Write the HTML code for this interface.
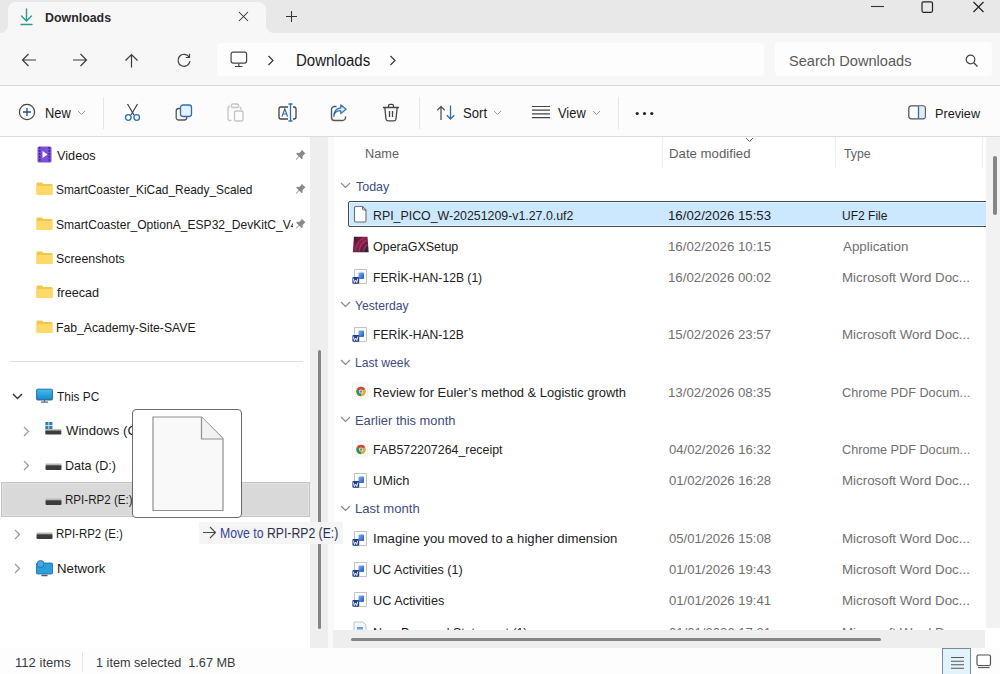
<!DOCTYPE html>
<html><head><meta charset="utf-8"><title>Downloads</title>
<style>
html,body{margin:0;padding:0;}
body{width:1000px;height:674px;overflow:hidden;position:relative;background:#fff;font-family:"Liberation Sans", sans-serif;}
</style></head><body>
<div style="position:absolute;left:0px;top:0px;width:1000px;height:33px;background:#e8e8e8;"></div>
<div style="position:absolute;left:8px;top:2px;width:258px;height:32px;background:#f7f7f7;border-radius:8px 8px 0 0;"></div>
<div style="position:absolute;left:0px;top:25px;width:8px;height:8px;background:#f7f7f7;"></div>
<div style="position:absolute;left:0px;top:17px;width:8px;height:16px;background:#e8e8e8;border-bottom-right-radius:8px;"></div>
<div style="position:absolute;left:266px;top:25px;width:8px;height:8px;background:#f7f7f7;"></div>
<div style="position:absolute;left:266px;top:17px;width:8px;height:16px;background:#e8e8e8;border-bottom-left-radius:8px;"></div>
<svg style="position:absolute;left:19px;top:8px;" width="15" height="18" viewBox="0 0 15 18"><g stroke="#2a9d8f" stroke-width="1.4" fill="none" stroke-linecap="round"><path d="M7.5 1v12M2.5 8l5 5 5-5M2 16.5h11"/></g></svg>
<div style="position:absolute;left:45.28px;top:9.70px;font-size:13.5px;line-height:normal;color:#2a2a2a;font-weight:700;white-space:pre;transform:scaleX(0.9169);transform-origin:0 0;">Downloads</div>
<svg style="position:absolute;left:238px;top:11px;" width="11" height="11" viewBox="0 0 11 11"><path d="M1 1l9 9M10 1l-9 9" stroke="#333" stroke-width="1.05"/></svg>
<svg style="position:absolute;left:285px;top:10px;" width="13" height="13" viewBox="0 0 13 13"><path d="M6.5 1v11M1 6.5h11" stroke="#333" stroke-width="1.05"/></svg>
<svg style="position:absolute;left:871px;top:4px;" width="14" height="4" viewBox="0 0 14 4"><path d="M0 2.5h13" stroke="#333" stroke-width="1.1"/></svg>
<svg style="position:absolute;left:921px;top:1px;" width="13" height="12" viewBox="0 0 13 12"><rect x="1" y="0.8" width="10.5" height="10.5" rx="1.5" fill="none" stroke="#222" stroke-width="1.2"/></svg>
<svg style="position:absolute;left:972px;top:1px;" width="13" height="12" viewBox="0 0 13 12"><path d="M1.5 1l10 10M11.5 1l-10 10" stroke="#222" stroke-width="1.2"/></svg>
<div style="position:absolute;left:0px;top:33px;width:1000px;height:53px;background:#f7f7f7;"></div>
<div style="position:absolute;left:0px;top:85px;width:1000px;height:1px;background:#d6d6d6;"></div>
<svg style="position:absolute;left:21px;top:53px;" width="16" height="14" viewBox="0 0 16 14"><path d="M15 7H1.5M7.5 1L1.5 7l6 6" stroke="#3c3c3c" stroke-width="1.2" fill="none"/></svg>
<svg style="position:absolute;left:72px;top:53px;" width="16" height="14" viewBox="0 0 16 14"><path d="M1 7h13.5M8.5 1l6 6-6 6" stroke="#3c3c3c" stroke-width="1.2" fill="none"/></svg>
<svg style="position:absolute;left:124px;top:53px;" width="15" height="15" viewBox="0 0 15 15"><path d="M7.5 14.5V1.5M1.5 7.5l6-6 6 6" stroke="#3c3c3c" stroke-width="1.2" fill="none"/></svg>
<svg style="position:absolute;left:176px;top:53px;" width="16" height="15" viewBox="0 0 16 15"><path d="M13.2 4.2A6 6 0 1 0 14 8" stroke="#3c3c3c" stroke-width="1.2" fill="none"/><path d="M13.5 0.8v3.7H9.8" stroke="#3c3c3c" stroke-width="1.2" fill="none"/></svg>
<div style="position:absolute;left:217px;top:43px;width:547px;height:33px;background:#fdfdfd;border-radius:4px;"></div>
<svg style="position:absolute;left:230px;top:51px;" width="18" height="17" viewBox="0 0 18 17"><rect x="1.1" y="1.1" width="15.5" height="11" rx="2" fill="none" stroke="#444" stroke-width="1.2"/><path d="M8.8 12.5v2.5M5 15.5h7.5" stroke="#444" stroke-width="1.2"/></svg>
<svg style="position:absolute;left:267px;top:55px;" width="8" height="11" viewBox="0 0 8 11"><path d="M1.5 1l4.5 4.5-4.5 4.5" stroke="#333" stroke-width="1.2" fill="none"/></svg>
<div style="position:absolute;left:295.86px;top:51.70px;font-size:16px;line-height:normal;color:#1a1a1a;font-weight:400;white-space:pre;transform:scaleX(0.9372);transform-origin:0 0;">Downloads</div>
<svg style="position:absolute;left:389px;top:55px;" width="8" height="11" viewBox="0 0 8 11"><path d="M1.5 1l4.5 4.5-4.5 4.5" stroke="#333" stroke-width="1.2" fill="none"/></svg>
<div style="position:absolute;left:775px;top:42px;width:217px;height:34px;background:#fdfdfd;border-radius:4px;"></div>
<div style="position:absolute;left:789.43px;top:52.00px;font-size:15px;line-height:normal;color:#5a5a5a;font-weight:400;white-space:pre;transform:scaleX(0.9728);transform-origin:0 0;">Search Downloads</div>
<svg style="position:absolute;left:965px;top:54px;" width="14" height="14" viewBox="0 0 14 14"><circle cx="5.5" cy="5.5" r="4.3" fill="none" stroke="#444" stroke-width="1.2"/><path d="M8.7 8.7l3.8 3.8" stroke="#444" stroke-width="1.3"/></svg>
<div style="position:absolute;left:0px;top:86px;width:1000px;height:50px;background:#fcfcfc;"></div>
<div style="position:absolute;left:0px;top:136px;width:1000px;height:1px;background:#dcdcdc;"></div>
<svg style="position:absolute;left:18px;top:103px;" width="18" height="18" viewBox="0 0 18 18"><circle cx="9" cy="9" r="7.6" fill="none" stroke="#444" stroke-width="1.2"/><path d="M9 5v8M5 9h8" stroke="#1f4e8c" stroke-width="1.3"/></svg>
<div style="position:absolute;left:44.68px;top:104.80px;font-size:14px;line-height:normal;color:#1a1a1a;font-weight:400;white-space:pre;transform:scaleX(0.9185);transform-origin:0 0;">New</div>
<svg style="position:absolute;left:77px;top:110px;" width="9" height="6" viewBox="0 0 9 6"><path d="M1 1l3.5 3.5L8 1" stroke="#999" stroke-width="1" fill="none"/></svg>
<div style="position:absolute;left:103px;top:97px;width:1px;height:32px;background:#e6e6e6;"></div>
<svg style="position:absolute;left:123px;top:103px;" width="19" height="19" viewBox="0 0 19 19"><path d="M4.5 1l6.5 11M14.5 1L8 12" stroke="#444" stroke-width="1.2" fill="none"/><circle cx="5.3" cy="14.5" r="2.8" fill="none" stroke="#3070a8" stroke-width="1.3"/><circle cx="13.7" cy="14.5" r="2.8" fill="none" stroke="#3070a8" stroke-width="1.3"/></svg>
<svg style="position:absolute;left:175px;top:104px;" width="18" height="18" viewBox="0 0 18 18"><rect x="1.2" y="4.5" width="10.5" height="11.5" rx="2.5" fill="none" stroke="#555" stroke-width="1.3"/><rect x="5.5" y="1" width="11" height="11.5" rx="2.5" fill="#e6f2fb" stroke="#3070a8" stroke-width="1.3"/></svg>
<svg style="position:absolute;left:227px;top:103px;" width="18" height="19" viewBox="0 0 18 19"><path d="M3 3.5h-0.5a1.5 1.5 0 0 0-1.5 1.5v11a1.5 1.5 0 0 0 1.5 1.5h2" fill="none" stroke="#c4c4c4" stroke-width="1.3"/><rect x="4.5" y="1" width="7" height="3.5" rx="1.2" fill="none" stroke="#c4c4c4" stroke-width="1.3"/><path d="M12.5 4.2a1.5 1.5 0 0 1 1.5 1.5v1" fill="none" stroke="#c4c4c4" stroke-width="1.3"/><rect x="7.5" y="8" width="8.5" height="10" rx="1.5" fill="none" stroke="#c4c4c4" stroke-width="1.3"/></svg>
<svg style="position:absolute;left:278px;top:103px;" width="19" height="19" viewBox="0 0 19 19"><path d="M10 4H3a2 2 0 0 0-2 2v8a2 2 0 0 0 2 2h7M15 4h1a2 2 0 0 1 2 2v8a2 2 0 0 1-2 2h-1" fill="none" stroke="#444" stroke-width="1.3"/><path d="M12.5 1v17M10.5 1h4M10.5 18h4" stroke="#3070a8" stroke-width="1.3"/><path d="M4 13.5l2.8-7.5 2.8 7.5M5 11h3.6" stroke="#3070a8" stroke-width="1.2" fill="none"/></svg>
<svg style="position:absolute;left:330px;top:104px;" width="19" height="18" viewBox="0 0 19 18"><path d="M6.5 2.5H4.5a3 3 0 0 0-3 3v8a3 3 0 0 0 3 3h8a3 3 0 0 0 3-3V12.5" fill="none" stroke="#555" stroke-width="1.4"/><path d="M3.8 12.3c0.6-3.6 3.2-5.6 7-5.6V9.6l5.2-4.3-5.2-4.3v2.8c-4.2 0.3-6.8 3.5-7 8.5z" fill="#dcedf9" stroke="#3070a8" stroke-width="1.2" stroke-linejoin="round"/></svg>
<svg style="position:absolute;left:382px;top:103px;" width="18" height="19" viewBox="0 0 18 19"><path d="M1 4.5h16M6.5 4.5V2.8a1.5 1.5 0 0 1 1.5-1.5h2a1.5 1.5 0 0 1 1.5 1.5v1.7" fill="none" stroke="#444" stroke-width="1.3"/><path d="M2.8 4.5l1.2 11.5a2 2 0 0 0 2 1.8h6a2 2 0 0 0 2-1.8l1.2-11.5" fill="none" stroke="#444" stroke-width="1.3"/><path d="M7.5 8v6M10.5 8v6" stroke="#444" stroke-width="1.3"/></svg>
<div style="position:absolute;left:419px;top:97px;width:1px;height:32px;background:#e6e6e6;"></div>
<svg style="position:absolute;left:436px;top:105px;" width="20" height="16" viewBox="0 0 20 16"><path d="M5 15V1.5M1.3 5.2l3.7-3.7 3.7 3.7" stroke="#555" stroke-width="1.3" fill="none"/><path d="M14.5 0.5v13.5M10.8 10.3l3.7 3.7 3.7-3.7" stroke="#3070a8" stroke-width="1.3" fill="none"/></svg>
<div style="position:absolute;left:462.76px;top:105.00px;font-size:14px;line-height:normal;color:#1a1a1a;font-weight:400;white-space:pre;transform:scaleX(0.9360);transform-origin:0 0;">Sort</div>
<svg style="position:absolute;left:493px;top:110px;" width="9" height="6" viewBox="0 0 9 6"><path d="M1 1l3.5 3.5L8 1" stroke="#999" stroke-width="1" fill="none"/></svg>
<svg style="position:absolute;left:531px;top:105px;" width="20" height="15" viewBox="0 0 20 15"><path d="M1 1.5h18M1 5.2h18M1 8.9h18M1 12.6h18" stroke="#444" stroke-width="1.2"/></svg>
<div style="position:absolute;left:558.30px;top:105.00px;font-size:14px;line-height:normal;color:#1a1a1a;font-weight:400;white-space:pre;transform:scaleX(0.9200);transform-origin:0 0;">View</div>
<svg style="position:absolute;left:592px;top:110px;" width="9" height="6" viewBox="0 0 9 6"><path d="M1 1l3.5 3.5L8 1" stroke="#999" stroke-width="1" fill="none"/></svg>
<div style="position:absolute;left:618px;top:97px;width:1px;height:32px;background:#e6e6e6;"></div>
<svg style="position:absolute;left:635px;top:111px;" width="20" height="5" viewBox="0 0 20 5"><circle cx="2.2" cy="2.5" r="1.6" fill="#222"/><circle cx="9.5" cy="2.5" r="1.6" fill="#222"/><circle cx="16.8" cy="2.5" r="1.6" fill="#222"/></svg>
<svg style="position:absolute;left:908px;top:105px;" width="19" height="15" viewBox="0 0 19 15"><rect x="0.8" y="0.8" width="16.5" height="13" rx="2.5" fill="none" stroke="#555" stroke-width="1.3"/><rect x="10.5" y="1.5" width="6" height="11.5" fill="#dcecf8"/><path d="M10.5 1v13" stroke="#3070a8" stroke-width="1.3"/></svg>
<div style="position:absolute;left:934.56px;top:106.00px;font-size:13.5px;line-height:normal;color:#1a1a1a;font-weight:400;white-space:pre;transform:scaleX(0.9383);transform-origin:0 0;">Preview</div>
<div style="position:absolute;left:0px;top:137px;width:330px;height:511px;background:#ffffff;"></div>
<svg style="position:absolute;left:37px;top:146px;" width="15" height="17" viewBox="0 0 15 17"><rect x="0.5" y="0.5" width="14" height="16" rx="1.5" fill="#7b4fd6"/><path d="M2 2h1.5M2 5h1.5M2 8h1.5M2 11h1.5M2 14h1.5M11.5 2H13M11.5 5H13M11.5 8H13M11.5 11H13M11.5 14H13" stroke="#3b1f7a" stroke-width="1.3"/><path d="M5.5 5l5 3.5-5 3.5z" fill="#fff"/></svg>
<div style="position:absolute;left:56.50px;top:147.50px;font-size:13.5px;line-height:normal;color:#1a1a1a;font-weight:400;white-space:pre;transform:scaleX(0.9415);transform-origin:0 0;">Videos</div>
<svg style="position:absolute;left:295px;top:148px;" width="12" height="12" viewBox="0 0 12 12"><path d="M6.5 1.5l4 4-1 .5-2 2.2.2 2-1 1-2.5-2.5-3 3-.5-.5 3-3-2.5-2.5 1-1 2 .2 2.2-2z" fill="#8a8a8a"/></svg>
<svg style="position:absolute;left:36px;top:182px;" width="17" height="13" viewBox="0 0 17 13"><path d="M0.5 1.5a1 1 0 0 1 1-1h4.5l1.5 1.5h8a1 1 0 0 1 1 1V12a1 1 0 0 1-1 1h-14a1 1 0 0 1-1-1z" fill="#f3c64f"/><path d="M0.5 4h16V12a1 1 0 0 1-1 1h-14a1 1 0 0 1-1-1z" fill="#ffd968"/></svg>
<div style="position:absolute;left:0;top:0;width:292.5px;height:674px;overflow:hidden;"><div style="position:absolute;left:56.12px;top:181.90px;font-size:13.5px;line-height:normal;color:#1a1a1a;font-weight:400;white-space:pre;transform:scaleX(0.8814);transform-origin:0 0;">SmartCoaster_KiCad_Ready_Scaled</div></div>
<svg style="position:absolute;left:295px;top:182px;" width="12" height="12" viewBox="0 0 12 12"><path d="M6.5 1.5l4 4-1 .5-2 2.2.2 2-1 1-2.5-2.5-3 3-.5-.5 3-3-2.5-2.5 1-1 2 .2 2.2-2z" fill="#8a8a8a"/></svg>
<svg style="position:absolute;left:36px;top:217px;" width="17" height="13" viewBox="0 0 17 13"><path d="M0.5 1.5a1 1 0 0 1 1-1h4.5l1.5 1.5h8a1 1 0 0 1 1 1V12a1 1 0 0 1-1 1h-14a1 1 0 0 1-1-1z" fill="#f3c64f"/><path d="M0.5 4h16V12a1 1 0 0 1-1 1h-14a1 1 0 0 1-1-1z" fill="#ffd968"/></svg>
<div style="position:absolute;left:0;top:0;width:292.5px;height:674px;overflow:hidden;"><div style="position:absolute;left:56.11px;top:216.50px;font-size:13.5px;line-height:normal;color:#1a1a1a;font-weight:400;white-space:pre;transform:scaleX(0.8941);transform-origin:0 0;">SmartCoaster_OptionA_ESP32_DevKitC_V4</div></div>
<svg style="position:absolute;left:295px;top:217px;" width="12" height="12" viewBox="0 0 12 12"><path d="M6.5 1.5l4 4-1 .5-2 2.2.2 2-1 1-2.5-2.5-3 3-.5-.5 3-3-2.5-2.5 1-1 2 .2 2.2-2z" fill="#8a8a8a"/></svg>
<svg style="position:absolute;left:36px;top:251px;" width="17" height="13" viewBox="0 0 17 13"><path d="M0.5 1.5a1 1 0 0 1 1-1h4.5l1.5 1.5h8a1 1 0 0 1 1 1V12a1 1 0 0 1-1 1h-14a1 1 0 0 1-1-1z" fill="#f3c64f"/><path d="M0.5 4h16V12a1 1 0 0 1-1 1h-14a1 1 0 0 1-1-1z" fill="#ffd968"/></svg>
<div style="position:absolute;left:56.08px;top:250.90px;font-size:13.5px;line-height:normal;color:#1a1a1a;font-weight:400;white-space:pre;transform:scaleX(0.9162);transform-origin:0 0;">Screenshots</div>
<svg style="position:absolute;left:36px;top:285px;" width="17" height="13" viewBox="0 0 17 13"><path d="M0.5 1.5a1 1 0 0 1 1-1h4.5l1.5 1.5h8a1 1 0 0 1 1 1V12a1 1 0 0 1-1 1h-14a1 1 0 0 1-1-1z" fill="#f3c64f"/><path d="M0.5 4h16V12a1 1 0 0 1-1 1h-14a1 1 0 0 1-1-1z" fill="#ffd968"/></svg>
<div style="position:absolute;left:57.00px;top:285.30px;font-size:13.5px;line-height:normal;color:#1a1a1a;font-weight:400;white-space:pre;transform:scaleX(0.9341);transform-origin:0 0;">freecad</div>
<svg style="position:absolute;left:36px;top:320px;" width="17" height="13" viewBox="0 0 17 13"><path d="M0.5 1.5a1 1 0 0 1 1-1h4.5l1.5 1.5h8a1 1 0 0 1 1 1V12a1 1 0 0 1-1 1h-14a1 1 0 0 1-1-1z" fill="#f3c64f"/><path d="M0.5 4h16V12a1 1 0 0 1-1 1h-14a1 1 0 0 1-1-1z" fill="#ffd968"/></svg>
<div style="position:absolute;left:56.10px;top:319.70px;font-size:13.5px;line-height:normal;color:#1a1a1a;font-weight:400;white-space:pre;transform:scaleX(0.9046);transform-origin:0 0;">Fab_Academy-Site-SAVE</div>
<div style="position:absolute;left:10px;top:361px;width:293px;height:1px;background:#e0e0e0;"></div>
<div style="position:absolute;left:1px;top:482px;width:309px;height:34.5px;background:#d9d9d9;border:1px solid #c4c4c4;box-sizing:border-box;box-shadow:inset 0 0 0 1px #e2e2e2;"></div>
<svg style="position:absolute;left:12px;top:393px;" width="11" height="7" viewBox="0 0 11 7"><path d="M1 1l4.5 4.5L10 1" stroke="#333" stroke-width="1.4" fill="none"/></svg>
<svg style="position:absolute;left:36px;top:388px;" width="17" height="16" viewBox="0 0 17 16"><defs><linearGradient id="mg" x1="0" y1="0" x2="0" y2="1"><stop offset="0" stop-color="#3fc0ef"/><stop offset="1" stop-color="#1b86c9"/></linearGradient></defs><rect x="0.6" y="1.2" width="15.8" height="10.8" rx="1" fill="url(#mg)" stroke="#1a5f95" stroke-width="0.9"/><path d="M8.5 12v1.5M5 14.2h7" stroke="#6a6a6a" stroke-width="1.3"/></svg>
<div style="position:absolute;left:56.90px;top:388.80px;font-size:13.5px;line-height:normal;color:#1a1a1a;font-weight:400;white-space:pre;transform:scaleX(0.8809);transform-origin:0 0;">This PC</div>
<svg style="position:absolute;left:23px;top:426px;" width="7" height="11" viewBox="0 0 7 11"><path d="M1 1l4.5 4.5L1 10" stroke="#9a9a9a" stroke-width="1.2" fill="none"/></svg>
<svg style="position:absolute;left:45px;top:421px;" width="17" height="14" viewBox="0 0 17 14"><rect x="0.3" y="1" width="3.2" height="3.2" fill="#2f7fb5"/><rect x="4.2" y="1" width="3.2" height="3.2" fill="#2f7fb5"/><rect x="0.3" y="4.9" width="3.2" height="3.2" fill="#2f7fb5"/><rect x="4.2" y="4.9" width="3.2" height="3.2" fill="#2f7fb5"/><rect x="0.3" y="8.4" width="16" height="1.6" fill="#9a9a9a"/><rect x="0.3" y="9.8" width="16" height="3.6" rx="0.6" fill="#3c3c3c"/></svg>
<div style="position:absolute;left:65.90px;top:423.20px;font-size:13.5px;line-height:normal;color:#1a1a1a;font-weight:400;white-space:pre;transform:scaleX(0.9762);transform-origin:0 0;">Windows (C:)</div>
<svg style="position:absolute;left:23px;top:460px;" width="7" height="11" viewBox="0 0 7 11"><path d="M1 1l4.5 4.5L1 10" stroke="#9a9a9a" stroke-width="1.2" fill="none"/></svg>
<svg style="position:absolute;left:45px;top:463px;" width="17" height="8" viewBox="0 0 17 8"><rect x="0.5" y="0.5" width="16" height="2.2" rx="0.8" fill="#b9b9b9"/><rect x="0.5" y="2.3" width="16" height="4.6" rx="0.8" fill="#3c3c3c"/></svg>
<div style="position:absolute;left:64.67px;top:457.60px;font-size:13.5px;line-height:normal;color:#1a1a1a;font-weight:400;white-space:pre;transform:scaleX(0.9283);transform-origin:0 0;">Data (D:)</div>
<svg style="position:absolute;left:45px;top:498px;" width="17" height="8" viewBox="0 0 17 8"><rect x="0.5" y="0.5" width="16" height="2.2" rx="0.8" fill="#b9b9b9"/><rect x="0.5" y="2.3" width="16" height="4.6" rx="0.8" fill="#3c3c3c"/></svg>
<div style="position:absolute;left:64.74px;top:492.30px;font-size:13.5px;line-height:normal;color:#1a1a1a;font-weight:400;white-space:pre;transform:scaleX(0.8584);transform-origin:0 0;">RPI-RP2 (E:)</div>
<svg style="position:absolute;left:14px;top:529px;" width="7" height="11" viewBox="0 0 7 11"><path d="M1 1l4.5 4.5L1 10" stroke="#9a9a9a" stroke-width="1.2" fill="none"/></svg>
<svg style="position:absolute;left:36px;top:532px;" width="17" height="8" viewBox="0 0 17 8"><rect x="0.5" y="0.5" width="16" height="2.2" rx="0.8" fill="#b9b9b9"/><rect x="0.5" y="2.3" width="16" height="4.6" rx="0.8" fill="#3c3c3c"/></svg>
<div style="position:absolute;left:56.05px;top:526.40px;font-size:13.5px;line-height:normal;color:#1a1a1a;font-weight:400;white-space:pre;transform:scaleX(0.8494);transform-origin:0 0;">RPI-RP2 (E:)</div>
<svg style="position:absolute;left:14px;top:563px;" width="7" height="11" viewBox="0 0 7 11"><path d="M1 1l4.5 4.5L1 10" stroke="#9a9a9a" stroke-width="1.2" fill="none"/></svg>
<svg style="position:absolute;left:36px;top:560px;" width="17" height="17" viewBox="0 0 17 17"><rect x="0.5" y="3" width="16" height="11" rx="1" fill="#2a9fdc" stroke="#1a6aa8" stroke-width="0.8"/><path d="M5.5 15.5h6" stroke="#555" stroke-width="1.5"/><circle cx="4.5" cy="4" r="3.5" fill="#4aa8e0" stroke="#1a6aa8" stroke-width="0.8"/></svg>
<div style="position:absolute;left:56.62px;top:560.80px;font-size:13.5px;line-height:normal;color:#1a1a1a;font-weight:400;white-space:pre;transform:scaleX(0.9792);transform-origin:0 0;">Network</div>
<div style="position:absolute;left:310px;top:137px;width:18px;height:511px;background:#eeeeee;"></div>
<div style="position:absolute;left:328px;top:137px;width:6px;height:511px;background:#f9f9f9;"></div>
<div style="position:absolute;left:318px;top:350px;width:3px;height:279px;background:#858585;border-radius:2px;"></div>
<div style="position:absolute;left:334px;top:137px;width:652px;height:493px;background:#ffffff;"></div>
<div style="position:absolute;left:364.56px;top:145.50px;font-size:13.5px;line-height:normal;color:#5f5f5f;font-weight:400;white-space:pre;transform:scaleX(0.9429);transform-origin:0 0;">Name</div>
<div style="position:absolute;left:662px;top:137px;width:1px;height:31px;background:#eeeeee;"></div>
<div style="position:absolute;left:668.72px;top:145.70px;font-size:13.5px;line-height:normal;color:#5f5f5f;font-weight:400;white-space:pre;transform:scaleX(0.9793);transform-origin:0 0;">Date modified</div>
<svg style="position:absolute;left:745px;top:137px;" width="9" height="6" viewBox="0 0 9 6"><path d="M1 1l3.5 3.5L8 1" stroke="#666" stroke-width="1" fill="none"/></svg>
<div style="position:absolute;left:835px;top:137px;width:1px;height:31px;background:#eeeeee;"></div>
<div style="position:absolute;left:843.50px;top:145.70px;font-size:13.5px;line-height:normal;color:#5f5f5f;font-weight:400;white-space:pre;transform:scaleX(0.9069);transform-origin:0 0;">Type</div>
<div style="position:absolute;left:982px;top:137px;width:1px;height:31px;background:#eeeeee;"></div>
<svg style="position:absolute;left:340px;top:182px;" width="11" height="7" viewBox="0 0 11 7"><path d="M1 1l4.5 4.5L10 1" stroke="#888" stroke-width="1.2" fill="none"/></svg>
<div style="position:absolute;left:356.00px;top:178.50px;font-size:13.5px;line-height:normal;color:#3d4c7e;font-weight:400;white-space:pre;transform:scaleX(0.9222);transform-origin:0 0;">Today</div>
<div style="position:absolute;left:347.5px;top:200.5px;width:650px;height:26.5px;background:#cce8ff;border:1.5px solid #3d4a58;border-radius:2px;box-sizing:border-box;box-shadow:inset 0 0 0 1px #e6f4ff;"></div>
<svg style="position:absolute;left:353px;top:205px;" width="15" height="18" viewBox="0 0 15 18"><path d="M3 1.5h6.5l3.5 3.5v10.5a1.5 1.5 0 0 1-1.5 1.5h-8.5a1.5 1.5 0 0 1-1.5-1.5v-12.5a1.5 1.5 0 0 1 1.5-1.5z" fill="#fdfdfd" stroke="#6f6f6f" stroke-width="1.1"/><path d="M9.5 1.5v2.5a1 1 0 0 0 1 1h2.5" fill="none" stroke="#6f6f6f" stroke-width="1"/></svg>
<div style="position:absolute;left:373.08px;top:208.20px;font-size:13.5px;line-height:normal;color:#222222;font-weight:400;white-space:pre;transform:scaleX(0.9157);transform-origin:0 0;">RPI_PICO_W-20251209-v1.27.0.uf2</div>
<div style="position:absolute;left:668.22px;top:208.20px;font-size:13.5px;line-height:normal;color:#1a1a1a;font-weight:400;white-space:pre;transform:scaleX(0.9808);transform-origin:0 0;">16/02/2026 15:53</div>
<div style="position:absolute;left:842.31px;top:208.20px;font-size:13.5px;line-height:normal;color:#1a1a1a;font-weight:400;white-space:pre;transform:scaleX(0.8900);transform-origin:0 0;">UF2 File</div>
<svg style="position:absolute;left:352px;top:236px;" width="18" height="17" viewBox="0 0 18 17"><defs><linearGradient id="og" x1="0" y1="0" x2="1" y2="1"><stop offset="0" stop-color="#3a0f24"/><stop offset="0.45" stop-color="#8c1f4c"/><stop offset="1" stop-color="#1f2430"/></linearGradient></defs><path d="M2 0.8h13.5l1.2 15.5H0.8z" fill="url(#og)"/><path d="M3.5 15c0.5-6 3-11 9-13.5M7 15.5c0.5-4.5 2.5-8.5 7-11M11.5 15.5c0.3-3 1.5-5.5 4-7" stroke="#c23a6e" stroke-width="1.1" fill="none" opacity="0.7"/></svg>
<div style="position:absolute;left:373.08px;top:238.50px;font-size:13.5px;line-height:normal;color:#222222;font-weight:400;white-space:pre;transform:scaleX(0.9242);transform-origin:0 0;">OperaGXSetup</div>
<div style="position:absolute;left:668.22px;top:238.50px;font-size:13.5px;line-height:normal;color:#707070;font-weight:400;white-space:pre;transform:scaleX(0.9808);transform-origin:0 0;">16/02/2026 10:15</div>
<div style="position:absolute;left:843.20px;top:238.50px;font-size:13.5px;line-height:normal;color:#707070;font-weight:400;white-space:pre;transform:scaleX(0.9892);transform-origin:0 0;">Application</div>
<svg style="position:absolute;left:352px;top:267px;" width="16" height="18" viewBox="0 0 16 18"><defs><linearGradient id="wg" x1="0" y1="0" x2="1" y2="1"><stop offset="0" stop-color="#7fb0ee"/><stop offset="1" stop-color="#1f56c8"/></linearGradient></defs><path d="M2.5 2.5h12v14h-12z" fill="#fdfdfd" stroke="#b4b4b4" stroke-width="0.8"/><rect x="6.5" y="5.5" width="5.5" height="6.5" rx="1" fill="url(#wg)"/><rect x="0.4" y="10" width="6.8" height="6.8" rx="1" fill="#213f86"/><path d="M1.4 11.6l1 4 1.2-2.6 1.2 2.6 1-4" stroke="#fff" stroke-width="0.9" fill="none"/></svg>
<div style="position:absolute;left:373.10px;top:269.70px;font-size:13.5px;line-height:normal;color:#222222;font-weight:400;white-space:pre;transform:scaleX(0.8983);transform-origin:0 0;">FERİK-HAN-12B (1)</div>
<div style="position:absolute;left:668.22px;top:269.70px;font-size:13.5px;line-height:normal;color:#707070;font-weight:400;white-space:pre;transform:scaleX(0.9808);transform-origin:0 0;">16/02/2026 00:02</div>
<div style="position:absolute;left:842.21px;top:269.70px;font-size:13.5px;line-height:normal;color:#707070;font-weight:400;white-space:pre;transform:scaleX(0.9874);transform-origin:0 0;">Microsoft Word Doc...</div>
<svg style="position:absolute;left:340px;top:301px;" width="11" height="7" viewBox="0 0 11 7"><path d="M1 1l4.5 4.5L10 1" stroke="#888" stroke-width="1.2" fill="none"/></svg>
<div style="position:absolute;left:355.10px;top:297.70px;font-size:13.5px;line-height:normal;color:#3d4c7e;font-weight:400;white-space:pre;transform:scaleX(0.9017);transform-origin:0 0;">Yesterday</div>
<svg style="position:absolute;left:352px;top:325px;" width="16" height="18" viewBox="0 0 16 18"><defs><linearGradient id="wg" x1="0" y1="0" x2="1" y2="1"><stop offset="0" stop-color="#7fb0ee"/><stop offset="1" stop-color="#1f56c8"/></linearGradient></defs><path d="M2.5 2.5h12v14h-12z" fill="#fdfdfd" stroke="#b4b4b4" stroke-width="0.8"/><rect x="6.5" y="5.5" width="5.5" height="6.5" rx="1" fill="url(#wg)"/><rect x="0.4" y="10" width="6.8" height="6.8" rx="1" fill="#213f86"/><path d="M1.4 11.6l1 4 1.2-2.6 1.2 2.6 1-4" stroke="#fff" stroke-width="0.9" fill="none"/></svg>
<div style="position:absolute;left:373.10px;top:327.00px;font-size:13.5px;line-height:normal;color:#222222;font-weight:400;white-space:pre;transform:scaleX(0.8980);transform-origin:0 0;">FERİK-HAN-12B</div>
<div style="position:absolute;left:668.22px;top:327.00px;font-size:13.5px;line-height:normal;color:#707070;font-weight:400;white-space:pre;transform:scaleX(0.9808);transform-origin:0 0;">15/02/2026 23:57</div>
<div style="position:absolute;left:842.21px;top:327.00px;font-size:13.5px;line-height:normal;color:#707070;font-weight:400;white-space:pre;transform:scaleX(0.9874);transform-origin:0 0;">Microsoft Word Doc...</div>
<svg style="position:absolute;left:340px;top:359px;" width="11" height="7" viewBox="0 0 11 7"><path d="M1 1l4.5 4.5L10 1" stroke="#888" stroke-width="1.2" fill="none"/></svg>
<div style="position:absolute;left:355.10px;top:355.20px;font-size:13.5px;line-height:normal;color:#3d4c7e;font-weight:400;white-space:pre;transform:scaleX(0.9000);transform-origin:0 0;">Last week</div>
<svg style="position:absolute;left:352px;top:382px;" width="16" height="18" viewBox="0 0 16 18"><rect x="0.5" y="1" width="15" height="16" fill="#fdfdfd" stroke="#efefef" stroke-width="0.8"/><g transform="translate(9 9.5)"><circle r="4.8" fill="#e0ad3c"/><path d="M0 0L-4.16 -2.4A4.8 4.8 0 0 1 4.16 -2.4z" fill="#c9473d"/><path d="M0 0L-4.16 -2.4A4.8 4.8 0 0 0 0 4.8z" fill="#3a9256"/><circle r="1.9" fill="#fff"/><circle r="1.3" fill="#5b86c9"/></g></svg>
<div style="position:absolute;left:373.04px;top:384.50px;font-size:13.5px;line-height:normal;color:#222222;font-weight:400;white-space:pre;transform:scaleX(0.9570);transform-origin:0 0;">Review for Euler’s method &amp; Logistic growth</div>
<div style="position:absolute;left:668.22px;top:384.50px;font-size:13.5px;line-height:normal;color:#707070;font-weight:400;white-space:pre;transform:scaleX(0.9808);transform-origin:0 0;">13/02/2026 08:35</div>
<div style="position:absolute;left:842.26px;top:384.50px;font-size:13.5px;line-height:normal;color:#707070;font-weight:400;white-space:pre;transform:scaleX(0.9388);transform-origin:0 0;">Chrome PDF Docum...</div>
<svg style="position:absolute;left:340px;top:416px;" width="11" height="7" viewBox="0 0 11 7"><path d="M1 1l4.5 4.5L10 1" stroke="#888" stroke-width="1.2" fill="none"/></svg>
<div style="position:absolute;left:355.04px;top:412.50px;font-size:13.5px;line-height:normal;color:#3d4c7e;font-weight:400;white-space:pre;transform:scaleX(0.9563);transform-origin:0 0;">Earlier this month</div>
<svg style="position:absolute;left:352px;top:440px;" width="16" height="18" viewBox="0 0 16 18"><rect x="0.5" y="1" width="15" height="16" fill="#fdfdfd" stroke="#efefef" stroke-width="0.8"/><g transform="translate(9 9.5)"><circle r="4.8" fill="#e0ad3c"/><path d="M0 0L-4.16 -2.4A4.8 4.8 0 0 1 4.16 -2.4z" fill="#c9473d"/><path d="M0 0L-4.16 -2.4A4.8 4.8 0 0 0 0 4.8z" fill="#3a9256"/><circle r="1.9" fill="#fff"/><circle r="1.3" fill="#5b86c9"/></g></svg>
<div style="position:absolute;left:373.08px;top:442.20px;font-size:13.5px;line-height:normal;color:#222222;font-weight:400;white-space:pre;transform:scaleX(0.9179);transform-origin:0 0;">FAB572207264_receipt</div>
<div style="position:absolute;left:669.20px;top:442.20px;font-size:13.5px;line-height:normal;color:#707070;font-weight:400;white-space:pre;transform:scaleX(0.9714);transform-origin:0 0;">04/02/2026 16:32</div>
<div style="position:absolute;left:842.26px;top:442.20px;font-size:13.5px;line-height:normal;color:#707070;font-weight:400;white-space:pre;transform:scaleX(0.9388);transform-origin:0 0;">Chrome PDF Docum...</div>
<svg style="position:absolute;left:352px;top:471px;" width="16" height="18" viewBox="0 0 16 18"><defs><linearGradient id="wg" x1="0" y1="0" x2="1" y2="1"><stop offset="0" stop-color="#7fb0ee"/><stop offset="1" stop-color="#1f56c8"/></linearGradient></defs><path d="M2.5 2.5h12v14h-12z" fill="#fdfdfd" stroke="#b4b4b4" stroke-width="0.8"/><rect x="6.5" y="5.5" width="5.5" height="6.5" rx="1" fill="url(#wg)"/><rect x="0.4" y="10" width="6.8" height="6.8" rx="1" fill="#213f86"/><path d="M1.4 11.6l1 4 1.2-2.6 1.2 2.6 1-4" stroke="#fff" stroke-width="0.9" fill="none"/></svg>
<div style="position:absolute;left:373.05px;top:473.00px;font-size:13.5px;line-height:normal;color:#222222;font-weight:400;white-space:pre;transform:scaleX(0.9514);transform-origin:0 0;">UMich</div>
<div style="position:absolute;left:669.20px;top:473.00px;font-size:13.5px;line-height:normal;color:#707070;font-weight:400;white-space:pre;transform:scaleX(0.9714);transform-origin:0 0;">01/02/2026 16:28</div>
<div style="position:absolute;left:842.21px;top:473.00px;font-size:13.5px;line-height:normal;color:#707070;font-weight:400;white-space:pre;transform:scaleX(0.9874);transform-origin:0 0;">Microsoft Word Doc...</div>
<svg style="position:absolute;left:340px;top:505px;" width="11" height="7" viewBox="0 0 11 7"><path d="M1 1l4.5 4.5L10 1" stroke="#888" stroke-width="1.2" fill="none"/></svg>
<div style="position:absolute;left:355.03px;top:501.40px;font-size:13.5px;line-height:normal;color:#3d4c7e;font-weight:400;white-space:pre;transform:scaleX(0.9692);transform-origin:0 0;">Last month</div>
<svg style="position:absolute;left:352px;top:529px;" width="16" height="18" viewBox="0 0 16 18"><defs><linearGradient id="wg" x1="0" y1="0" x2="1" y2="1"><stop offset="0" stop-color="#7fb0ee"/><stop offset="1" stop-color="#1f56c8"/></linearGradient></defs><path d="M2.5 2.5h12v14h-12z" fill="#fdfdfd" stroke="#b4b4b4" stroke-width="0.8"/><rect x="6.5" y="5.5" width="5.5" height="6.5" rx="1" fill="url(#wg)"/><rect x="0.4" y="10" width="6.8" height="6.8" rx="1" fill="#213f86"/><path d="M1.4 11.6l1 4 1.2-2.6 1.2 2.6 1-4" stroke="#fff" stroke-width="0.9" fill="none"/></svg>
<div style="position:absolute;left:373.03px;top:531.40px;font-size:13.5px;line-height:normal;color:#222222;font-weight:400;white-space:pre;transform:scaleX(0.9747);transform-origin:0 0;">Imagine you moved to a higher dimension</div>
<div style="position:absolute;left:669.20px;top:531.40px;font-size:13.5px;line-height:normal;color:#707070;font-weight:400;white-space:pre;transform:scaleX(0.9714);transform-origin:0 0;">05/01/2026 15:08</div>
<div style="position:absolute;left:842.21px;top:531.40px;font-size:13.5px;line-height:normal;color:#707070;font-weight:400;white-space:pre;transform:scaleX(0.9874);transform-origin:0 0;">Microsoft Word Doc...</div>
<svg style="position:absolute;left:352px;top:560px;" width="16" height="18" viewBox="0 0 16 18"><defs><linearGradient id="wg" x1="0" y1="0" x2="1" y2="1"><stop offset="0" stop-color="#7fb0ee"/><stop offset="1" stop-color="#1f56c8"/></linearGradient></defs><path d="M2.5 2.5h12v14h-12z" fill="#fdfdfd" stroke="#b4b4b4" stroke-width="0.8"/><rect x="6.5" y="5.5" width="5.5" height="6.5" rx="1" fill="url(#wg)"/><rect x="0.4" y="10" width="6.8" height="6.8" rx="1" fill="#213f86"/><path d="M1.4 11.6l1 4 1.2-2.6 1.2 2.6 1-4" stroke="#fff" stroke-width="0.9" fill="none"/></svg>
<div style="position:absolute;left:373.07px;top:562.00px;font-size:13.5px;line-height:normal;color:#222222;font-weight:400;white-space:pre;transform:scaleX(0.9330);transform-origin:0 0;">UC Activities (1)</div>
<div style="position:absolute;left:669.20px;top:562.00px;font-size:13.5px;line-height:normal;color:#707070;font-weight:400;white-space:pre;transform:scaleX(0.9714);transform-origin:0 0;">01/01/2026 19:43</div>
<div style="position:absolute;left:842.21px;top:562.00px;font-size:13.5px;line-height:normal;color:#707070;font-weight:400;white-space:pre;transform:scaleX(0.9874);transform-origin:0 0;">Microsoft Word Doc...</div>
<svg style="position:absolute;left:352px;top:590px;" width="16" height="18" viewBox="0 0 16 18"><defs><linearGradient id="wg" x1="0" y1="0" x2="1" y2="1"><stop offset="0" stop-color="#7fb0ee"/><stop offset="1" stop-color="#1f56c8"/></linearGradient></defs><path d="M2.5 2.5h12v14h-12z" fill="#fdfdfd" stroke="#b4b4b4" stroke-width="0.8"/><rect x="6.5" y="5.5" width="5.5" height="6.5" rx="1" fill="url(#wg)"/><rect x="0.4" y="10" width="6.8" height="6.8" rx="1" fill="#213f86"/><path d="M1.4 11.6l1 4 1.2-2.6 1.2 2.6 1-4" stroke="#fff" stroke-width="0.9" fill="none"/></svg>
<div style="position:absolute;left:373.06px;top:592.70px;font-size:13.5px;line-height:normal;color:#222222;font-weight:400;white-space:pre;transform:scaleX(0.9419);transform-origin:0 0;">UC Activities</div>
<div style="position:absolute;left:669.20px;top:592.70px;font-size:13.5px;line-height:normal;color:#707070;font-weight:400;white-space:pre;transform:scaleX(0.9714);transform-origin:0 0;">01/01/2026 19:41</div>
<div style="position:absolute;left:842.21px;top:592.70px;font-size:13.5px;line-height:normal;color:#707070;font-weight:400;white-space:pre;transform:scaleX(0.9874);transform-origin:0 0;">Microsoft Word Doc...</div>
<div style="position:absolute;left:330px;top:615px;width:656px;height:15px;overflow:hidden;">
<svg style="position:absolute;left:23px;top:6px;" width="14" height="18" viewBox="0 0 14 18"><path d="M1 1h9l3 3v13H1z" fill="#f4f8fc" stroke="#b0b8c0" stroke-width="0.8"/><rect x="4" y="6" width="6" height="2.5" fill="#6a9fd8"/></svg>
</div>
<div style="position:absolute;left:0;top:0;width:1000px;height:630px;overflow:hidden;"><div style="position:absolute;left:373.09px;top:625.00px;font-size:13.5px;line-height:normal;color:#1a1a1a;font-weight:400;white-space:pre;transform:scaleX(0.9107);transform-origin:0 0;">New Personal Statement (1)</div></div>
<div style="position:absolute;left:0;top:0;width:1000px;height:630px;overflow:hidden;"><div style="position:absolute;left:669.20px;top:625.00px;font-size:13.5px;line-height:normal;color:#707070;font-weight:400;white-space:pre;transform:scaleX(0.9714);transform-origin:0 0;">01/01/2026 17:31</div></div>
<div style="position:absolute;left:0;top:0;width:1000px;height:630px;overflow:hidden;"><div style="position:absolute;left:842.21px;top:625.00px;font-size:13.5px;line-height:normal;color:#707070;font-weight:400;white-space:pre;transform:scaleX(0.9874);transform-origin:0 0;">Microsoft Word Doc...</div></div>
<div style="position:absolute;left:986px;top:137px;width:14px;height:491px;background:#f2f2f2;"></div>
<div style="position:absolute;left:993px;top:156px;width:3.5px;height:59px;background:#858585;border-radius:2px;"></div>
<div style="position:absolute;left:333px;top:630px;width:652px;height:18px;background:#eeeeee;"></div>
<div style="position:absolute;left:351px;top:638px;width:530px;height:3px;background:#858585;border-radius:2px;"></div>
<div style="position:absolute;left:132px;top:409px;width:110px;height:109px;background:#fff;border:1.5px solid #6a6a6a;border-radius:4px;box-sizing:border-box;"></div>
<svg style="position:absolute;left:152px;top:416px;" width="72" height="96" viewBox="0 0 72 96"><path d="M1 1h48.5L71 22.5V94.5H1z" fill="#f9f9f9" stroke="#8f8f8f" stroke-width="1.2"/><path d="M49.5 1v22h21.5" fill="#f2f2f2" stroke="#8f8f8f" stroke-width="1.2"/></svg>
<div style="position:absolute;left:199px;top:521.5px;width:144px;height:22.5px;background:#f5f5f5;"></div>
<svg style="position:absolute;left:202px;top:526px;" width="15" height="13" viewBox="0 0 15 13"><path d="M1 6.5h12.5M8 1l5.5 5.5L8 12" stroke="#4a4a4a" stroke-width="1.1" fill="none"/></svg>
<div style="position:absolute;left:219.93px;top:524.50px;font-size:14px;line-height:normal;color:#2f2f4f;font-weight:400;white-space:pre;transform:scaleX(0.8739);transform-origin:0 0;"><span style="color:#34449a">Move to</span> RPI-RP2 (E:)</div>
<div style="position:absolute;left:0px;top:648px;width:1000px;height:26px;background:#fdfdfd;"></div>
<div style="position:absolute;left:15.28px;top:655.20px;font-size:13.5px;line-height:normal;color:#3a3a3a;font-weight:400;white-space:pre;transform:scaleX(0.9688);transform-origin:0 0;">112 items</div>
<div style="position:absolute;left:82px;top:652px;width:1px;height:20px;background:#e5e5e5;"></div>
<div style="position:absolute;left:96.06px;top:655.20px;font-size:13.5px;line-height:normal;color:#3a3a3a;font-weight:400;white-space:pre;transform:scaleX(0.9388);transform-origin:0 0;">1 item selected  1.67 MB</div>
<div style="position:absolute;left:942px;top:648px;width:29px;height:28px;background:#e3f3fb;border:1.3px solid #6f8f9f;box-sizing:border-box;"></div>
<svg style="position:absolute;left:950px;top:656px;" width="16" height="14" viewBox="0 0 16 14"><path d="M1 1.5h13M1 5.2h13M1 8.7h13M1 12.2h13" stroke="#555" stroke-width="1.1"/></svg>
<svg style="position:absolute;left:976px;top:654px;" width="16" height="15" viewBox="0 0 16 15"><rect x="1" y="1" width="13.5" height="10.5" rx="1.5" fill="none" stroke="#555" stroke-width="1.2"/><path d="M2 13.5h11.5" stroke="#555" stroke-width="1.2"/></svg>
</body></html>
